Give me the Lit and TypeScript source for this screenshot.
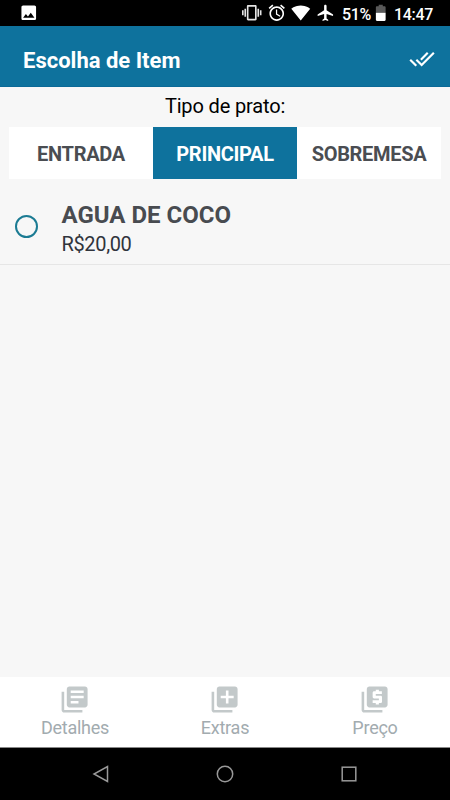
import { LitElement, html, css, svg } from "lit";
import { customElement, property, state } from "lit/decorators.js";

const ICONS: Record<string, string> = {
  image: "M21 19V5c0-1.1-.9-2-2-2H5c-1.1 0-2 .9-2 2v14c0 1.1.9 2 2 2h14c1.1 0 2-.9 2-2zM5 18l3.500-4.500 2.500 3.010L14.500 12l4.500 6z",
  vibration: "M0 15h2V9H0v6zm3 2h2V7H3v10zm19-8v6h2V9h-2zm-3 8h2V7h-2v10zM16.500 2.500h-9C6.670 2.500 6 3.170 6 4v16c0 .83.67 1.500 1.500 1.500h9c.83 0 1.500-.67 1.500-1.500V4c0-.83-.67-1.500-1.500-1.500zM16 19.500H8v-15h8v15z",
  alarm: "M22 5.720l-4.600-3.860-1.290 1.530 4.600 3.860L22 5.720zM7.880 3.390L6.600 1.860 2 5.710l1.290 1.530 4.590-3.850zM12.500 8H11v6l4.750 2.850.75-1.230-4-2.370V8zM12 4c-4.970 0-9 4.030-9 9s4.020 9 9 9c4.970 0 9-4.030 9-9s-4.030-9-9-9zm0 16c-3.870 0-7-3.130-7-7s3.130-7 7-7 7 3.130 7 7-3.130 7-7 7z",
  wifi: "M12.010 21.490L23.640 7c-.45-.34-4.930-4-11.640-4C5.280 3 .81 6.660.36 7l11.630 14.490.01.010.01-.010z",
  plane: "M21 16v-2l-8-5V3.500c0-.83-.67-1.500-1.500-1.500S10 2.670 10 3.500V9l-8 5v2l8-2.500V19l-2 1.500V22l3.500-1 3.500 1v-1.500L13 19v-5.500l8 2.500z",
  doneAll: "M18 7l-1.410-1.410-6.340 6.340 1.410 1.410L18 7zm4.240-1.410L11.660 16.170 7.480 12l-1.410 1.410L11.660 19l12-12-1.420-1.410zM.41 13.410L6 19l1.410-1.410L1.830 12 .41 13.410z",
  books: "M4 6H2v14c0 1.100.9 2 2 2h14v-2H4V6zm16-4H8c-1.100 0-2 .9-2 2v12c0 1.100.9 2 2 2h12c1.100 0 2-.9 2-2V4c0-1.100-.9-2-2-2zm-1 9H9V9h10v2zm-4 4H9v-2h6v2zm4-8H9V5h10v2z",
  add: "M4 6H2v14c0 1.100.9 2 2 2h14v-2H4V6zm16-4H8c-1.100 0-2 .9-2 2v12c0 1.100.9 2 2 2h12c1.100 0 2-.9 2-2V4c0-1.100-.9-2-2-2zm-1 9h-4v4h-2v-4H9V9h4V5h2v4h4v2z",
  price: "M4 6H2v14c0 1.100.9 2 2 2h14v-2H4V6zm16-4H8c-1.100 0-2 .9-2 2v12c0 1.100.9 2 2 2h12c1.100 0 2-.9 2-2V4c0-1.100-.9-2-2-2zM17.600 7.700h-4.700v1.300h3.700c.6 0 1.100.4 1.100 1v3.600c0 .6-.5 1.100-1.100 1.100H15.300v1.100h-2.400v-1.100h-2.400v-2.100h4.800v-1.500h-3.700c-.6 0-1.100-.4-1.100-1V6.700c0-.6.5-1.100 1.100-1.100H12.900V4.400h2.400V5.600h2.300z",
};

@customElement("app-icon")
class AppIcon extends LitElement {
  @property() name = "";
  static styles = css`
    :host { display: block; width: 19.5px; height: 19.5px; flex: none; }
    .glyph { display: block; width: 100%; height: 100%; fill: currentColor; }
  `;
  render() {
    return html`<svg class="glyph" viewBox="0 0 24 24">
      ${this.name === "battery"
        ? svg`<path opacity=".35" d="M18 5.300C18 4.600 17.400 4 16.700 4H14.500V2h-5v2H7.300C6.600 4 6 4.600 6 5.300V12h12z"/><path d="M6 12v8.700c0 .7.6 1.300 1.300 1.300h9.400c.7 0 1.300-.6 1.300-1.300V12z"/>`
        : svg`<path d=${ICONS[this.name] ?? ""} />`}
    </svg>`;
  }
}

@customElement("app-root")
class AppRoot extends LitElement {
  @state() private course = "PRINCIPAL";

  static styles = css`
    :host {
      display: flex; flex-direction: column; width: 450px; height: 800px;
      overflow: hidden; background: #f7f7f7; color: #000;
      font-family: Roboto, "Liberation Sans", sans-serif;
    }
    .status {
      display: flex; align-items: center; height: 26px; flex: none; box-sizing: border-box;
      padding-left: 19px; background: #000; color: #fff; font-size: 16px; font-weight: 500;
    }
    .vibration { margin-left: 203.5px; color: #e4e4e4; }
    .alarm { margin-left: 5px; }
    .wifi { margin-left: 5px; }
    .plane { margin-left: 5px; }
    .percent { margin-left: 7px; width: 29px; white-space: nowrap; line-height: 20px; padding-top: 3px; letter-spacing: -0.4px; }
    .battery { margin: 0 4px 0 -0.5px; }
    .clock { line-height: 20px; padding-top: 3px; letter-spacing: -0.3px; }
    .header {
      display: flex; align-items: center; justify-content: space-between; height: 61px; flex: none;
      box-sizing: border-box; padding: 0 15.5px 0 23px; background: #0e729d; color: #fff;
      border-bottom: 1px solid #0b6a98;
    }
    .title { margin: 9px 0 0; font-size: 22px; line-height: 26px; font-weight: 700; }
    .confirm { width: 26px; height: 26px; margin-top: 6px; }
    .prompt { margin-top: 6px; text-align: center; font-size: 20px; line-height: 26px; flex: none; letter-spacing: -0.15px; }
    .tabs { display: flex; margin: 8px 9px 0; height: 52px; flex: none; background: #fff; }
    .tab {
      flex: 1; border: 0; padding: 2px 0 0; background: none; color: #4a4d52; letter-spacing: -0.3px;
      font: 700 20px/24px Roboto, "Liberation Sans", sans-serif;
    }
    .tab.active { background: #0e729d; color: #fff; }
    .item {
      display: flex; align-items: center; height: 86px; flex: none; box-sizing: border-box;
      padding: 11px 0 0 15px; border-bottom: 1px solid #e6e6e6;
    }
    .radio { box-sizing: border-box; width: 23px; height: 23px; border: 2px solid #1b7b93; border-radius: 50%; margin-top: -1px; }
    .info { margin: 4px 0 0 23.5px; }
    .name { font-size: 24px; line-height: 29px; font-weight: 700; color: #484b50; }
    .cost { font-size: 20px; line-height: 28px; color: #30343c; letter-spacing: -0.35px; }
    .bottom { display: flex; margin-top: auto; height: 70px; flex: none; background: #fff; }
    .action { flex: 1; display: flex; flex-direction: column; align-items: center; padding-top: 6.6px; color: #a2abaf; }
    .action-icon { width: 31.2px; height: 31.2px; color: #c3c9ca; }
    .action-label { font-size: 18px; line-height: 22px; margin-top: 2.2px; letter-spacing: -0.25px; }
    .system {
      display: flex; justify-content: center; align-items: center; height: 53px; flex: none;
      box-sizing: border-box; background: #000; border-top: 1px solid #888;
    }
    .key { width: 24px; height: 24px; margin: 0 50px; fill: none; stroke: #999; stroke-width: 1.5; }
  `;

  render() {
    return html`
      <div class="status">
        <app-icon name="image"></app-icon>
        <app-icon class="vibration" name="vibration"></app-icon>
        <app-icon class="alarm" name="alarm"></app-icon>
        <app-icon class="wifi" name="wifi"></app-icon>
        <app-icon class="plane" name="plane"></app-icon>
        <span class="percent">51%</span>
        <app-icon class="battery" name="battery"></app-icon>
        <span class="clock">14:47</span>
      </div>
      <header class="header">
        <h1 class="title">Escolha de Item</h1>
        <app-icon class="confirm" name="doneAll"></app-icon>
      </header>
      <div class="prompt">Tipo de prato:</div>
      <div class="tabs">
        ${["ENTRADA", "PRINCIPAL", "SOBREMESA"].map(
          (t) => html`<button class="tab ${t === this.course ? "active" : ""}" @click=${() => (this.course = t)}>${t}</button>`
        )}
      </div>
      <div class="item">
        <span class="radio"></span>
        <div class="info">
          <div class="name">AGUA DE COCO</div>
          <div class="cost">R$20,00</div>
        </div>
      </div>
      <nav class="bottom">
        ${[["books", "Detalhes"], ["add", "Extras"], ["price", "Preço"]].map(
          ([icon, label]) => html`<div class="action">
            <app-icon class="action-icon" name=${icon}></app-icon>
            <span class="action-label">${label}</span>
          </div>`
        )}
      </nav>
      <div class="system">
        <svg class="key" viewBox="0 0 24 24"><path d="M18.500 4.500v15L5 12z" /></svg>
        <svg class="key" viewBox="0 0 24 24"><circle cx="12" cy="12" r="7.700" /></svg>
        <svg class="key" viewBox="0 0 24 24"><rect x="5.200" y="5.200" width="13.600" height="13.600" /></svg>
      </div>
    `;
  }
}
